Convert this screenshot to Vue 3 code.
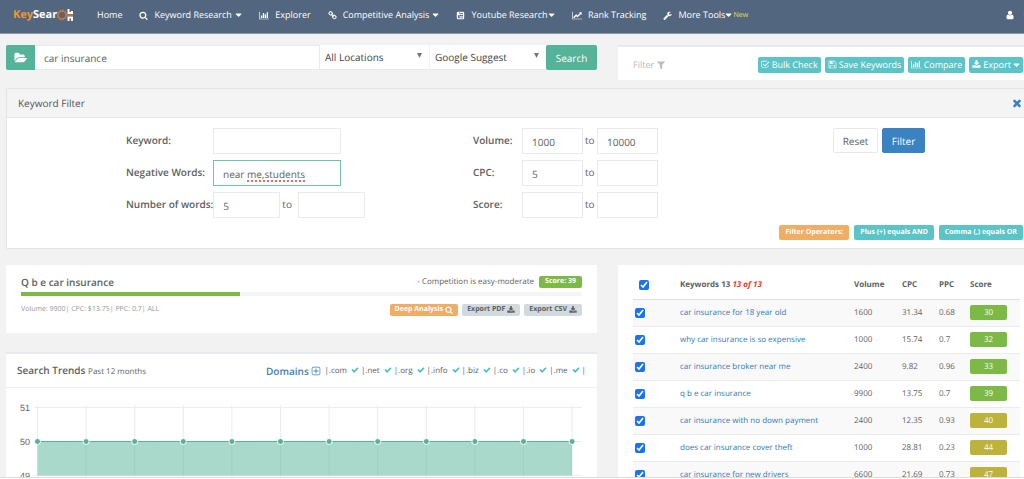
<script setup>
import { ref } from 'vue'

const icons = {
  search: { w: 1792, d: 'M1216 832q0-185-131.5-316.5t-316.5-131.5-316.5 131.5-131.5 316.5 131.5 316.5 316.5 131.5 316.5-131.5 131.5-316.5zm512 832q0 52-38 90t-90 38q-54 0-90-38l-343-342q-179 124-399 124-143 0-273.5-55.5t-225-150-150-225-55.5-273.5 55.5-273.5 150-225 225-150 273.5-55.5 273.5 55.5 225 150 150 225 55.5 273.5q0 220-124 399l343 343q37 37 37 90z' },
  bars: { w: 2048, d: 'M640 896v512h-256v-512h256zm384-512v1024h-256v-1024h256zm1024 1152v128h-2048v-1536h128v1408h1920zm-640-896v768h-256v-768h256zm384-384v1152h-256v-1152h256z' },
  line: { w: 2048, d: 'M2048 1536v128h-2048v-1536h128v1408h1920zm-128-1248v435q0 21-19.5 29.5t-35.5-7.5l-121-121-633 633q-10 10-23 10t-23-10l-233-233-416 416-192-192 585-585q10-10 23-10t23 10l233 233 464-464-121-121q-16-16-7.5-35.5t29.5-19.5h435q14 0 23 9t9 23z' },
  chain: { w: 1792, d: 'M1520 1216q0-40-28-68l-208-208q-28-28-68-28-42 0-72 32 3 3 19 18.5t21.5 21.5 15 19 13 25.5 3.5 27.5q0 40-28 68t-68 28q-15 0-27.5-3.5t-25.5-13-19-15-21.5-21.5-18.5-19q-33 31-33 73 0 40 28 68l206 207q27 27 68 27 40 0 68-26l147-146q28-28 28-67zm-703-705q0-40-28-68l-206-207q-28-28-68-28-39 0-68 27l-147 146q-28 28-28 67 0 40 28 68l208 208q27 27 68 27 42 0 72-31-3-3-19-18.5t-21.5-21.5-15-19-13-25.5-3.5-27.5q0-40 28-68t68-28q15 0 27.5 3.5t25.5 13 19 15 21.5 21.5 18.5 19q33-31 33-73zm895 705q0 120-85 203l-147 146q-83 83-203 83-121 0-204-85l-206-207q-83-83-83-203 0-123 88-209l-88-88q-86 88-208 88-120 0-204-84l-208-208q-84-84-84-204t85-203l147-146q83-83 203-83 121 0 204 85l206 207q83 83 83 203 0 123-88 209l88 88q86-88 208-88 120 0 204 84l208 208q84 84 84 204z' },
  video: { w: 1792, d: 'M448 128h896q119 0 203 84t84 203v962q0 119-84 203t-203 84h-896q-119 0-203-84t-84-203v-962q0-119 84-203t203-84zM560 260l90 250v150h90v-150l90-250h-90l-45 150-45-150zM870 400v260h260v-260zM1180 400v260h180v-260zM400 800v640h992v-640zM520 900h230v90h-70v350h-90v-350h-70zM800 1000h90v250h60v-250h90v340h-240zM1100 900h90v110h120v330h-210z' },
  wrench: { w: 1792, d: 'M448 1472q0-26-19-45t-45-19-45 19-19 45 19 45 45 19 45-19 19-45zm644-420l-682 682q-37 37-90 37-52 0-91-37l-106-108q-38-36-38-90 0-53 38-91l681-681q39 98 114.5 173.5t173.5 114.5zm634-435q0 39-23 106-47 134-164.5 217.5t-258.5 83.5q-185 0-316.5-131.5t-131.5-316.5 131.5-316.5 316.5-131.5q58 0 121.5 16.5t107.5 46.5q16 11 16 28t-16 28l-293 169v224l193 107q5-3 79-48.5t135.5-81 70.5-35.5q15 0 23.5 10t8.5 25z' },
  user: { w: 1792, d: 'M1536 1399q0 109-62.5 187t-150.5 78h-854q-88 0-150.5-78t-62.5-187q0-85 8.5-160.5t31.5-152 58.5-131 94-89 134.5-34.5q131 128 313 128t313-128q76 0 134.5 34.5t94 89 58.5 131 31.5 152 8.5 160.5zm-256-887q0 159-112.5 271.5t-271.5 112.5-271.5-112.5-112.5-271.5 112.5-271.5 271.5-112.5 271.5 112.5 112.5 271.5z' },
  folder: { w: 2048, d: 'M1943 952q0 31-31 66l-336 396q-43 51-120.5 86.5t-143.5 35.5h-1088q-34 0-60.5-13t-26.5-43q0-31 31-66l336-396q43-51 120.5-86.5t143.5-35.5h1088q34 0 60.5 13t26.5 43zm-343-344v160h-832q-94 0-197 47.5t-164 119.5l-337 396-5 6q0-4-.5-12.5t-.5-12.5v-960q0-92 66-158t158-66h320q92 0 158 66t66 158v32h544q92 0 158 66t66 158z' },
  filter: { w: 1792, d: 'M1595 295q17 41-14 70l-493 493v742q0 42-39 59-13 5-25 5-27 0-45-19l-256-256q-19-19-19-45v-486l-493-493q-31-29-14-70 17-39 59-39h1280q42 0 59 39z' },
  check: { w: 1792, d: 'M1671 566q0 40-28 68l-724 724-136 136q-28 28-68 28t-68-28l-136-136-362-362q-28-28-28-68t28-68l136-136q28-28 68-28t68 28l294 295 656-657q28-28 68-28t68 28l136 136q28 28 28 68z' },
  times: { w: 1792, d: 'M1490 1322q0 40-28 68l-136 136q-28 28-68 28t-68-28l-294-294-294 294q-28 28-68 28t-68-28l-136-136q-28-28-28-68t28-68l294-294-294-294q-28-28-28-68t28-68l136-136q28-28 68-28t68 28l294 294 294-294q28-28 68-28t68 28l136 136q28 28 28 68t-28 68l-294 294 294 294q28 28 28 68z' },
  download: { w: 1792, d: 'M1344 1344q0-26-19-45t-45-19-45 19-19 45 19 45 45 19 45-19 19-45zm256 0q0-26-19-45t-45-19-45 19-19 45 19 45 45 19 45-19 19-45zm128-224v320q0 40-28 68t-68 28h-1472q-40 0-68-28t-28-68v-320q0-40 28-68t68-28h465l135 136q58 56 136 56t136-56l136-136h464q40 0 68 28t28 68zm-325-569q17 41-14 70l-448 448q-18 19-45 19t-45-19l-448-448q-31-29-14-70 17-39 59-39h256v-448q0-26 19-45t45-19h256q26 0 45 19t19 45v448h256q42 0 59 39z' },
  checkbox: { w: 1792, d: 'M1472 930v318q0 119-84.500 203.500t-203.500 84.500h-832q-119 0-203.500-84.500t-84.500-203.500v-832q0-119 84.500-203.500t203.500-84.500h832q63 0 117 25l-113 121h-836q-66 0-113 47t-47 113v832q0 66 47 113t113 47h832q66 0 113-47t47-113v-190zM1650 450l-800 800q-24 24-57 24t-57-24l-400-400 140-140 317 317 717-717z' },
  floppy: { w: 1792, d: 'M512 1536h768v-384h-768zM1408 1536h128v-896q0-14-10-38.500t-20-34.500l-281-281q-10-10-34-20t-39-10v416q0 40-28 68t-68 28h-576q-40 0-68-28t-28-68v-416h-128v1280h128v-416q0-40 28-68t68-28h832q40 0 68 28t28 68zM896 256v384h192v-384zM1664 640v928q0 40-28 68t-68 28h-1344q-40 0-68-28t-28-68v-1344q0-40 28-68t68-28h928q40 0 88 20t76 48l280 280q28 28 48 76t20 88z' },
  plus: { w: 1792, d: 'M416 128h960q119 0 203.500 84.500t84.500 203.500v960q0 119-84.500 203.500t-203.500 84.500h-960q-119 0-203.500-84.500t-84.500-203.500v-960q0-119 84.500-203.500t203.500-84.500zM416 256q-66 0-113 47t-47 113v960q0 66 47 113t113 47h960q66 0 113-47t47-113v-960q0-66-47-113t-113-47zM826 448h140v378h378v140h-378v378h-140v-378h-378v-140h378z' },
  caret: { w: 1280, d: 'M1152 704q0 26-19 45l-448 448q-19 19-45 19t-45-19l-448-448q-19-19-19-45t19-45 45-19h896q26 0 45 19t19 45z' },
}

const nav = [
  { text: 'Home' },
  { text: 'Keyword Research', icon: 'search', menu: true },
  { text: 'Explorer', icon: 'bars' },
  { text: 'Competitive Analysis', icon: 'chain', menu: true },
  { text: 'Youtube Research', icon: 'video', menu: true, tight: true },
  { text: 'Rank Tracking', icon: 'line' },
  { text: 'More Tools', icon: 'wrench', menu: true, tight: true, note: 'New' },
]
const actions = [
  { text: 'Bulk Check', icon: 'checkbox' },
  { text: 'Save Keywords', icon: 'floppy' },
  { text: 'Compare', icon: 'bars' },
  { text: 'Export', icon: 'download', menu: true },
]
const query = ref('car insurance')
const filter = ref({ keyword: '', negative: 'near me,students', wordsFrom: '5', wordsTo: '' })
const ranges = ref([
  { label: 'Volume:', from: '1000', to: '10000' },
  { label: 'CPC:', from: '5', to: '' },
  { label: 'Score:', from: '', to: '' },
])
const domains = ['.com', '.net', '.org', '.info', '.biz', '.co', '.io', '.me']
const rows = ref([
  ['car insurance for 18 year old', '1600', '31.34', '0.68', 30],
  ['why car insurance is so expensive', '1000', '15.74', '0.7', 32],
  ['car insurance broker near me', '2400', '9.82', '0.96', 33],
  ['q b e car insurance', '9900', '13.75', '0.7', 39],
  ['car insurance with no down payment', '2400', '12.35', '0.93', 40],
  ['does car insurance cover theft', '1000', '28.81', '0.23', 44],
  ['car insurance for new drivers', '6600', '21.69', '0.73', 47],
].map(([keyword, volume, cpc, ppc, score]) => ({ keyword, volume, cpc, ppc, score, on: true })))
const allOn = ref(true)
const months = Array.from({ length: 12 }, (_, i) => 31.5 + i * 48.6)
</script>

<template>
  <div class="page">
    <header class="nav">
      <a class="logo" href="#" aria-label="KeySearch">
        <span class="key">Key</span><span>Sear</span>
        <svg class="gear" viewBox="0 0 16 14"><circle cx="5" cy="7" r="4" fill="none" stroke="#d9752f" stroke-width="1.500" /><circle cx="5" cy="7" r="5" fill="none" stroke="#d9752f" stroke-width="1" stroke-dasharray="1.500 1.400" /><path d="M9 7h7" stroke="#d9752f" stroke-width="1.500" /><path d="M10.500 1h2v3h1.500V3h2V6h-5.500zM10.500 8.500H16V13h-2v-2.500h-1.500V13h-2z" fill="#fff" /></svg>
      </a>
      <nav class="links">
        <a v-for="item in nav" :key="item.text" href="#" :class="{ tight: item.tight }">
          <svg v-if="item.icon" class="icon lead" :viewBox="`0 0 ${icons[item.icon].w} 1792`"><path fill-rule="evenodd" :d="icons[item.icon].d" /></svg>
          <span>{{ item.text }}</span>
          <svg v-if="item.menu" class="icon caret" viewBox="0 0 1280 1792"><path :d="icons.caret.d" /></svg>
          <small v-if="item.note">{{ item.note }}</small>
        </a>
      </nav>
      <a class="account" href="#" aria-label="Account">
        <svg class="icon" viewBox="0 0 1792 1792"><path :d="icons.user.d" /></svg>
        <svg class="icon caret" viewBox="0 0 1280 1792"><path :d="icons.caret.d" /></svg>
      </a>
    </header>

    <main>
      <div class="columns top">
        <form class="search" @submit.prevent>
          <button type="button" class="folder" aria-label="Open folder"><svg class="icon" viewBox="0 0 2048 1792"><path :d="icons.folder.d" /></svg></button>
          <input v-model="query" type="text" aria-label="Keyword search" />
          <div class="pick">
            <select aria-label="Location"><option>All Locations</option></select>
            <svg viewBox="0 0 5 5"><path d="M0 0h5L2.500 5z" /></svg>
          </div>
          <div class="pick wide">
            <select aria-label="Source"><option>Google Suggest</option></select>
            <svg viewBox="0 0 5 5"><path d="M0 0h5L2.500 5z" /></svg>
          </div>
          <button class="go">Search</button>
        </form>
        <div class="toolbar">
          <a href="#" class="filter-link">Filter <svg class="icon" viewBox="0 0 1792 1792"><path :d="icons.filter.d" /></svg></a>
          <div class="actions">
            <button v-for="a in actions" :key="a.text" type="button">
              <svg class="icon" :viewBox="`0 0 ${icons[a.icon].w} 1792`"><path fill-rule="evenodd" :d="icons[a.icon].d" /></svg>
              <span>{{ a.text }}</span>
              <svg v-if="a.menu" class="icon caret" viewBox="0 0 1280 1792"><path :d="icons.caret.d" /></svg>
            </button>
          </div>
        </div>
      </div>

      <section class="filter-panel">
        <div class="filter-head">
          <h2>Keyword Filter</h2>
          <button type="button" aria-label="Close"><svg class="icon" viewBox="0 0 1792 1792"><path :d="icons.times.d" /></svg></button>
        </div>
        <form class="filter-form" @submit.prevent>
          <div class="fields">
            <div class="field">
              <label for="f-keyword">Keyword:</label>
              <input id="f-keyword" v-model="filter.keyword" class="long" type="text" />
            </div>
            <div class="field">
              <label for="f-negative">Negative Words:</label>
              <div class="spell"><input id="f-negative" v-model="filter.negative" class="long active" type="text" /><i></i></div>
            </div>
            <div class="field">
              <label for="f-words">Number of words:</label>
              <input id="f-words" v-model="filter.wordsFrom" class="mid" type="text" />
              <span class="to far">to</span>
              <input v-model="filter.wordsTo" class="mid" type="text" aria-label="Number of words, to" />
            </div>
          </div>
          <div class="fields ranges">
            <div v-for="r in ranges" :key="r.label" class="field">
              <label :for="'r-' + r.label">{{ r.label }}</label>
              <input :id="'r-' + r.label" v-model="r.from" type="text" />
              <span class="to">to</span>
              <input v-model="r.to" type="text" :aria-label="r.label + ' to'" />
            </div>
          </div>
          <div class="submit">
            <button type="reset">Reset</button>
            <button type="submit" class="primary">Filter</button>
          </div>
        </form>
        <div class="hints">
          <span class="orange">Filter Operators:</span>
          <span>Plus (+) equals AND</span>
          <span>Comma (,) equals OR</span>
        </div>
      </section>

      <div class="columns">
        <div class="left">
          <section class="summary">
            <div class="line">
              <h2>Q b e car insurance</h2>
              <p class="level">- Competition is easy-moderate <span class="tag green">Score: 39</span></p>
            </div>
            <div class="bar"><div :style="{ width: '39%' }"></div></div>
            <div class="line">
              <p class="stats">Volume: 9900| CPC: $13.75| PPC: 0.7| ALL</p>
              <div class="exports">
                <button type="button" class="tag orange">Deep Analysis <svg class="icon" viewBox="0 0 1792 1792"><path :d="icons.search.d" /></svg></button>
                <button v-for="f in ['PDF', 'CSV']" :key="f" type="button" class="tag">Export {{ f }} <svg class="icon" viewBox="0 0 1792 1792"><path :d="icons.download.d" /></svg></button>
              </div>
            </div>
          </section>

          <section class="trends">
            <div class="trends-head">
              <h2>Search Trends <small>Past 12 months</small></h2>
              <div class="domains">
                <a href="#">Domains <svg class="icon" viewBox="0 0 1792 1792"><path fill-rule="evenodd" :d="icons.plus.d" /></svg></a>
                <span v-for="d in domains" :key="d">|{{ d }}<svg class="icon" viewBox="0 0 1792 1792"><path :d="icons.check.d" /></svg></span>
                <span>|</span>
              </div>
            </div>
            <svg class="chart" viewBox="0 0 591 110" role="img" aria-label="Search trends">
              <path d="M28 19.500H576M28 53.500H576M28 87.500H576" class="grid" />
              <path v-for="x in months" :key="'g' + x" :d="`M${x} 17V92`" class="grid" />
              <path d="M31.500 53H566V87.500H31.500z" fill="#54b398" fill-opacity="0.5" />
              <path d="M31 53.500H566" stroke="#54b398" stroke-width="1.200" />
              <circle v-for="x in months" :key="'c' + x" :cx="x" cy="53.500" r="3" class="dot" />
              <text x="24" y="23">51</text>
              <text x="24" y="57">50</text>
              <text x="24" y="91">49</text>
            </svg>
          </section>
        </div>

        <section class="results">
          <table>
            <colgroup><col class="c-check" /><col /><col class="c-volume" /><col class="c-cpc" /><col class="c-ppc" /><col class="c-score" /></colgroup>
            <thead>
              <tr>
                <th class="all"><input v-model="allOn" type="checkbox" aria-label="Select all" /></th>
                <th>Keywords 13 <em>13 of 13</em></th>
                <th>Volume</th><th>CPC</th><th>PPC</th><th>Score</th>
              </tr>
            </thead>
            <tbody>
              <tr v-for="r in rows" :key="r.keyword">
                <td class="one"><input v-model="r.on" type="checkbox" :aria-label="r.keyword" /></td>
                <td><a href="#">{{ r.keyword }}</a></td>
                <td>{{ r.volume }}</td>
                <td>{{ r.cpc }}</td>
                <td>{{ r.ppc }}</td>
                <td><span class="score" :class="{ fair: r.score >= 40 }">{{ r.score }}</span></td>
              </tr>
            </tbody>
          </table>
        </section>
      </div>
    </main>
    <footer></footer>
  </div>
</template>

<style>
body { overflow: hidden; }
</style>

<style scoped>
.page { display: flex; flex-direction: column; height: 100vh; background: #f2f2f2; color: #5c5f61; font: 8px/14px "Open Sans", "Noto Sans", sans-serif; text-rendering: geometricPrecision; }
*, *::before { box-sizing: border-box; }
a { color: inherit; text-decoration: none; }
h2, p { margin: 0; font-size: inherit; font-weight: 400; }
button, input, select { font: inherit; color: inherit; margin: 0; text-rendering: inherit; }
button { border: 0; border-radius: 2px; padding: 0; white-space: nowrap; }
.icon { height: 9px; fill: currentColor; flex: none; }
.caret { height: 10px; }

.nav { flex: none; display: flex; align-items: center; height: 34px; padding: 0 0 3px 13px; background: #52677f; border-bottom: 1px solid #8c97a8; color: #fff; white-space: nowrap; font-size: 9px; }
.logo { display: flex; align-items: center; width: 84px; font-size: 11px; font-weight: 700; }
.key { color: #f0952f; }
.gear { width: 16px; height: 14px; }
.links { display: flex; gap: 17px; }
.links a { display: flex; align-items: center; gap: 3px; }
.links .tight { gap: 0; }
.lead { margin-right: 3px; }
.tight .lead { margin-right: 6px; }
.links small { color: #e0e04a; font-size: 7px; padding-top: 2px; margin-left: 1px; }
.account { display: flex; align-items: center; gap: 8px; margin-left: auto; width: 19px; overflow: hidden; }
.account .icon:first-child { height: 10px; }

main { flex: 1; min-height: 0; overflow: hidden; padding-left: 6px; }
.columns { display: grid; grid-template-columns: minmax(0, 591fr) minmax(0, 406fr); gap: 21px; align-items: start; }
.top { padding: 11px 0 8px; }
.search { display: flex; height: 25px; font-size: 10px; }
.folder { width: 29px; background: #54b398; color: #fff; display: flex; align-items: center; justify-content: center; border-radius: 2px 0 0 2px; }
.folder .icon { height: 12px; }
.search input { flex: 1; min-width: 0; border: 1px solid #e8eaeb; border-left: 0; padding: 1px 9px 0; background: #fff; }
.pick { position: relative; width: 109px; background: #fff; border-bottom: 1px solid #e8eaeb; color: #444; }
.pick.wide { width: 117px; border-left: 1px solid #f3f3f3; }
.pick select { width: 100%; height: 100%; appearance: none; border: 0; background: none; padding: 0 5px; }
.pick svg { position: absolute; top: 8px; right: 7px; width: 5px; height: 5px; fill: #777; }
.go { width: 51px; background: #54b398; color: #fff; font-size: 10px; }
.toolbar { display: flex; justify-content: space-between; align-items: center; height: 35px; padding: 2px 1px 0 15px; background: #fff; border-top: 2px solid #e9e9e9; }
.filter-link { color: #b9bbbc; font-size: 9px; }
.filter-link .icon { height: 10px; vertical-align: -2px; }
.actions { display: flex; gap: 4px; font-size: 9px; }
.actions button { display: flex; align-items: center; gap: 2px; height: 16px; padding: 0 3px; background: #5bc4c7; color: #fff; }

.filter-panel { background: #fff; border: 1px solid #e3e4e5; border-right: 0; border-radius: 2px 0 0 2px; height: 161px; }
.filter-head { display: flex; justify-content: space-between; align-items: center; height: 29px; padding: 0 1px 0 11px; background: #f4f4f4; border-bottom: 1px solid #e7e8e9; font-size: 10px; color: #555; }
.filter-head button { display: flex; background: none; color: #3a82c2; }
.filter-head .icon { height: 12px; }
.filter-form { display: flex; padding: 10px 0 0 119px; height: 107px; font-size: 10px; }
.fields { display: flex; flex-direction: column; gap: 7px; width: 347px; }
.field { display: flex; align-items: flex-start; height: 25px; }
.field label { font-weight: 600; min-width: 87px; line-height: 24px; white-space: nowrap; }
.field input { width: 61px; height: 26px; border: 1px solid #e9eaeb; background: #fff; padding: 1px 9px 0; }
.field input.long { width: 128px; }
.field input.mid { width: 67px; }
.field input.active { border-color: #6fc3ab; }
.field.field .to { width: 14px; padding-left: 2px; line-height: 24px; }
.field.field .to.far { width: 18px; }
.field.field.field .mid { flex: none; }
.ranges.ranges label { min-width: 49px; }
.ranges { width: 360px; }
.spell { position: relative; }
.spell i { position: absolute; left: 34px; bottom: 4px; width: 58px; border-bottom: 2px dotted #ee6a60; }
.submit { display: flex; align-items: flex-start; gap: 4px; font-size: 10px; }
.submit button { height: 25px; width: 45px; background: #fff; border: 1px solid #e7eaec; }
.submit .primary { width: 43px; background: #3a82c2; border-color: #3a82c2; color: #fff; }
.hints { display: flex; justify-content: flex-end; gap: 5px; padding-right: 1px; font-size: 7px; font-weight: 700; color: #fff; }
.hints span { background: #5bc4c7; border-radius: 2px; padding: 0 6px; line-height: 15px; white-space: nowrap; }
.orange.orange { background: #f0ad65; color: #fff; }

.filter-panel + .columns { margin-top: 16px; }
.summary, .results, .trends { background: #fff; }
.summary { height: 68px; padding: 10px 15px 0; }
.line { display: flex; justify-content: space-between; align-items: center; white-space: nowrap; height: 14px; }
.line h2 { font-size: 10px; font-weight: 600; }
.level { display: flex; align-items: center; gap: 5px; }
.tag { display: inline-flex; align-items: center; gap: 2px; height: 12px; padding: 0 5px; border-radius: 2px; background: #d1dade; color: #5e5e5e; font-size: 7px; font-weight: 700; }
.tag .icon { height: 8px; }
.green.green { background: #7cb947; color: #fff; padding: 0 6px; }
.bar { height: 4px; margin: 3px 0 7px; background: #f5f5f5; }
.bar div { height: 100%; background: #7cb947; }
.stats { color: #96989a; font-size: 7px; }
.exports { display: flex; gap: 4px; }
.trends { margin-top: 19px; border-top: 2px solid #e7eaec; }
.trends-head { display: flex; justify-content: space-between; align-items: center; height: 34px; padding: 0 11px; border-bottom: 1px solid #eeeff0; white-space: nowrap; }
.trends-head h2 { font-size: 10px; font-weight: 600; }
.trends-head small { font-size: 8px; font-weight: 400; }
.domains { display: flex; align-items: center; gap: 2px; }
.domains a { color: #3f80bd; font-size: 10px; font-weight: 600; margin-right: 1px; }
.domains a .icon { height: 10px; vertical-align: -1px; }
.domains span .icon { height: 8px; color: #4fbfc6; margin-left: 4px; vertical-align: -1px; }
.chart { display: block; width: 100%; }
.grid { stroke: #ececec; fill: none; }
.dot { fill: #54b398; stroke: #fff; stroke-width: 1; }
.chart text { font: 9px "Liberation Sans", sans-serif; fill: #666; text-anchor: end; }

.results { padding: 0 4px 0 15px; }
table { width: 100%; border-collapse: collapse; table-layout: fixed; }
.c-check { width: 47px; }
.c-volume { width: 48px; }
.c-cpc { width: 37px; }
.c-ppc { width: 31px; }
.c-score { width: 50px; }
th, td { padding: 0; text-align: left; white-space: nowrap; }
th { height: 34px; padding-top: 6px; font-weight: 700; border-bottom: 1px solid #dfe0e1; }
th em { color: #f0352b; }
td { height: 27px; border-bottom: 1px solid #eaebec; }
tbody tr:nth-child(odd) { background: #f9f9f9; }
td a { color: #337ab7; }
th input, td input { display: block; width: 10px; height: 10px; accent-color: #1a73f5; }
.all { padding-left: 6px; }
.one { padding-left: 2px; }
.score { display: block; width: 37px; line-height: 15px; border-radius: 2px; background: #7cb947; color: #fff; text-align: center; }
.fair { background: #bdb23c; }
footer { flex: none; height: 2px; background: #fff; border-top: 1px solid #dcdcdc; }
</style>
